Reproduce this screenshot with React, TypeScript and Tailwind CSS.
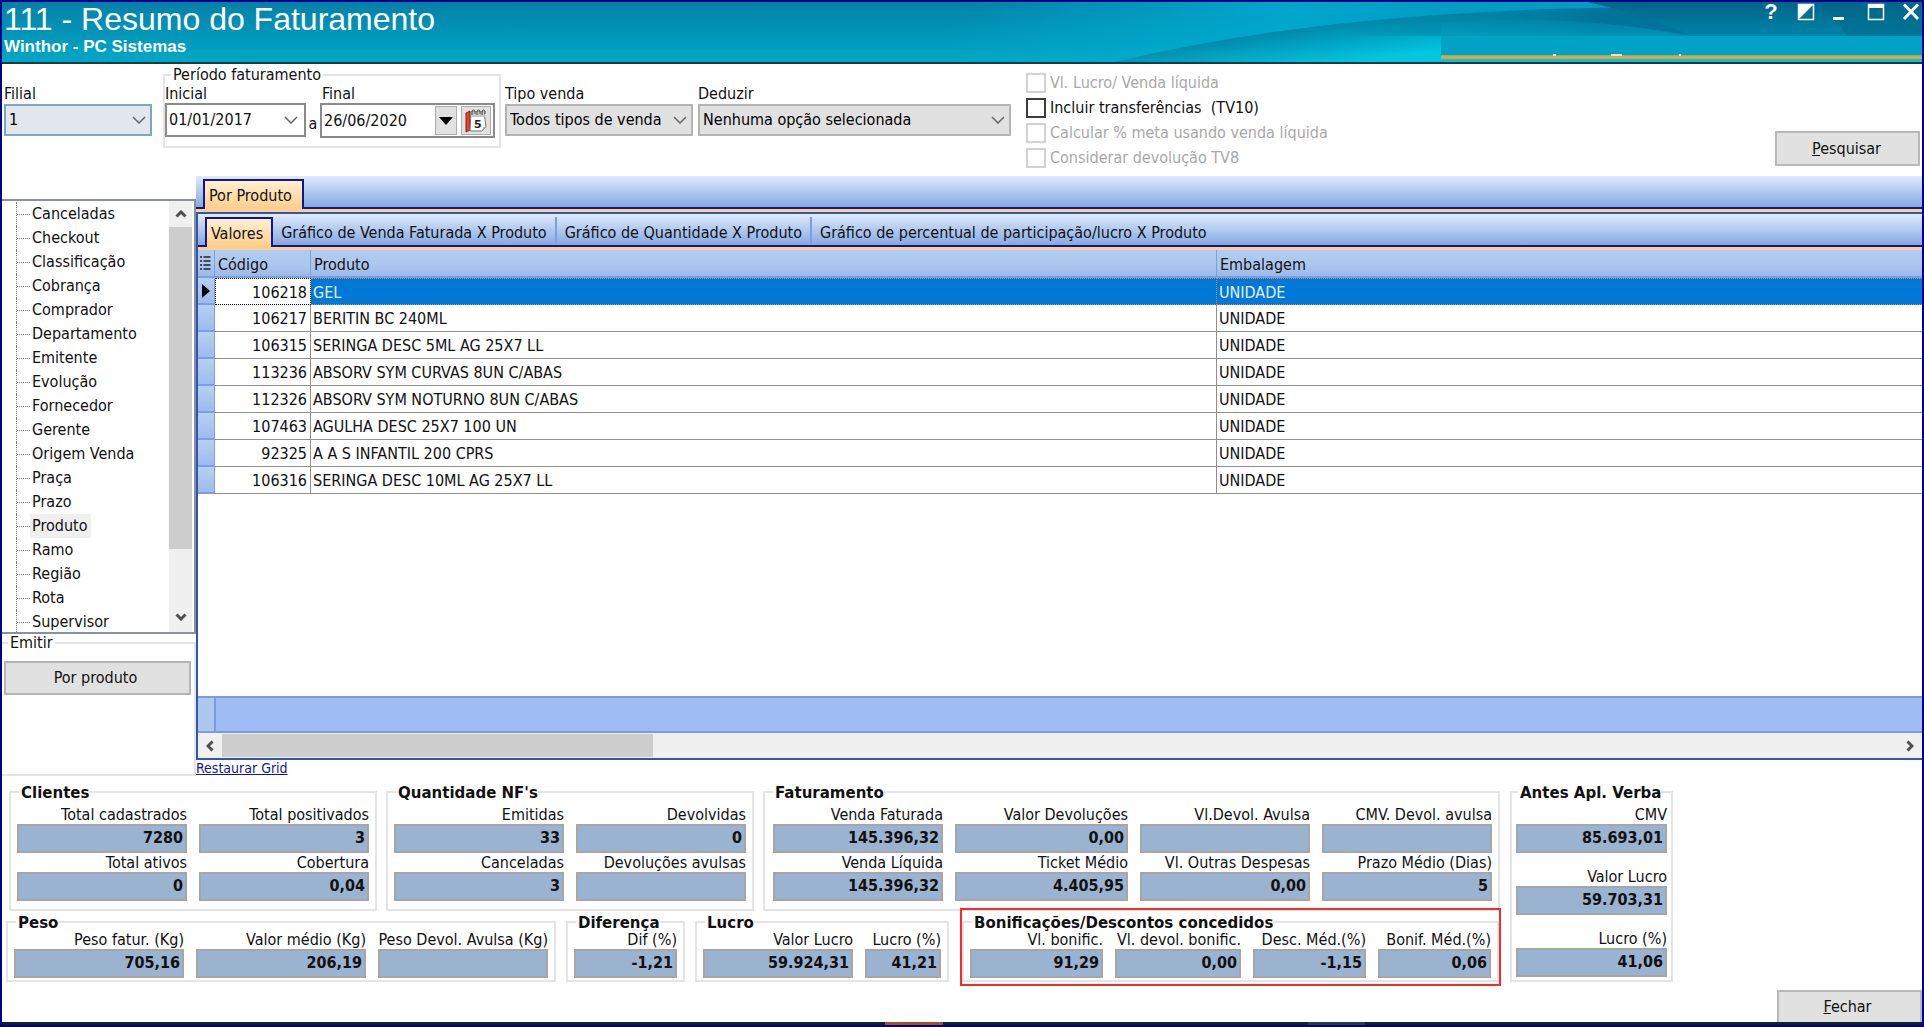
import React, { useId, useState } from 'react';
import { clsx } from 'clsx';

interface StatProps {
    label: string;
    value?: string;
    width?: string;
}

interface Product {
    code: string;
    name: string;
    unit: string;
}

const treeItems = [
    'Canceladas', 'Checkout', 'Classificação', 'Cobrança', 'Comprador', 'Departamento',
    'Emitente', 'Evolução', 'Fornecedor', 'Gerente', 'Origem Venda', 'Praça', 'Prazo',
    'Produto', 'Ramo', 'Região', 'Rota', 'Supervisor',
];

const products: Product[] = [
    { code: '106218', name: 'GEL', unit: 'UNIDADE' },
    { code: '106217', name: 'BERITIN BC 240ML', unit: 'UNIDADE' },
    { code: '106315', name: 'SERINGA DESC 5ML AG 25X7 LL', unit: 'UNIDADE' },
    { code: '113236', name: 'ABSORV SYM CURVAS 8UN C/ABAS', unit: 'UNIDADE' },
    { code: '112326', name: 'ABSORV SYM NOTURNO 8UN C/ABAS', unit: 'UNIDADE' },
    { code: '107463', name: 'AGULHA DESC 25X7 100 UN', unit: 'UNIDADE' },
    { code: '92325', name: 'A A S INFANTIL 200 CPRS', unit: 'UNIDADE' },
    { code: '106316', name: 'SERINGA DESC 10ML AG 25X7 LL', unit: 'UNIDADE' },
];

const gridTabs = [
    'Valores',
    'Gráfico de Venda Faturada X Produto',
    'Gráfico de Quantidade X Produto',
    'Gráfico de percentual de participação/lucro X Produto',
];

const filters = [
    { label: 'Vl. Lucro/ Venda líquida', disabled: true },
    { label: 'Incluir transferências  (TV10)', disabled: false },
    { label: 'Calcular % meta usando venda líquida', disabled: true },
    { label: 'Considerar devolução TV8', disabled: true },
];

const Chevron: React.FC<{ className?: string }> = ({ className }) => (
    <svg viewBox="0 0 14 8" fill="none" stroke="#666" className={clsx('h-2 w-3.5', className)}>
        <path d="M1 1l6 6 6-6" strokeWidth="1.5" />
    </svg>
);

const ScrollArrow: React.FC<{ className?: string }> = ({ className }) => (
    <svg viewBox="0 0 12 8" fill="none" stroke="#505050" className={clsx('h-2 w-3', className)}>
        <path d="M1.500 6.500L6 2l4.500 4.500" strokeWidth="3" />
    </svg>
);

const CalendarIcon = () => (
    <svg viewBox="0 0 22 24" className="h-6 w-[22px]">
        <path d="M1 4l4-2v19l-4 2z" fill="#e0452c" stroke="#8f1d10" />
        <path d="M6 3h13l2 15-4 4H5z" fill="#fff" stroke="#777" />
        <path d="M17 22l1-4h3z" fill="#b5b5b5" />
        <path d="M6 3h13l1 5H6z" fill="#c9c9c9" />
        <path d="M7 6V2q1.500-2 3 0v3M12 6V2q1.500-2 3 0v3M17 6V2q1.500-2 3 0v3" fill="none" stroke="#444" />
        <text x="9" y="19" fontSize="11" fontWeight="700" fontFamily="DejaVu Sans" fill="#222233">5</text>
    </svg>
);

const HeaderArt = () => (
    <svg viewBox="0 0 1920 60" preserveAspectRatio="none" className="absolute inset-0 h-full w-full">
        <defs>
            <linearGradient id="base" x1="0" y1="0" x2="0" y2="1">
                <stop offset="0" stopColor="#0480a8" />
                <stop offset="1" stopColor="#00a8c6" />
            </linearGradient>
            <linearGradient id="sky" gradientUnits="userSpaceOnUse" x1="960" y1="0" x2="1400" y2="120">
                <stop offset="0" stopColor="#00b0d2" stopOpacity="0" />
                <stop offset="0.7" stopColor="#00acd0" stopOpacity="0.85" />
                <stop offset="1" stopColor="#009cc4" />
            </linearGradient>
            <linearGradient id="wave" gradientUnits="userSpaceOnUse" x1="1300" y1="20" x2="1306" y2="66">
                <stop offset="0" stopColor="#007ea3" />
                <stop offset="1" stopColor="#00c6e0" />
            </linearGradient>
            <linearGradient id="shade" gradientUnits="userSpaceOnUse" x1="1340" y1="0" x2="1600" y2="0">
                <stop offset="0" stopColor="#006a8e" stopOpacity="0" />
                <stop offset="1" stopColor="#00739a" />
            </linearGradient>
            <linearGradient id="glow" gradientUnits="userSpaceOnUse" x1="1540" y1="14" x2="1540" y2="34">
                <stop offset="0" stopColor="#0090b4" stopOpacity="0.2" />
                <stop offset="1" stopColor="#009cc0" stopOpacity="0.8" />
            </linearGradient>
            <linearGradient id="deep" x1="0" y1="0" x2="0" y2="1">
                <stop offset="0" stopColor="#00648a" />
                <stop offset="1" stopColor="#0084a6" />
            </linearGradient>
        </defs>
        <rect width="1920" height="60" fill="url(#base)" />
        <rect x="900" width="1020" height="60" fill="url(#sky)" />
        <path d="M1113 60Q1330 7 1650 5H1920V60z" fill="url(#wave)" />
        <path d="M1340 22Q1480 6 1650 5H1720V34H1340z" fill="url(#shade)" />
        <path d="M1439 21Q1560 10 1690 34H1439z" fill="url(#glow)" />
        <path d="M1586 0Q1640 12 1690 34H1920V0z" fill="url(#deep)" />
        <path d="M1817 0Q1832 14 1845 34H1920V0z" fill="#00688a" fillOpacity="0.5" />
        <path d="M1439 34H1920V53H1439z" fill="#00a2c5" />
        <path d="M1439 53.500H1920V57H1439z" fill="#f0a02c" />
        <path d="M1551 53h3M1609 53h11M1677 53h2" stroke="#fff" strokeWidth="1.500" />
    </svg>
);

const Stat: React.FC<StatProps> = ({ label, value = '', width = 'w-[170px]' }) => {
    const id = useId();
    return (
        <div className={clsx('flex flex-col', width)}>
            <label htmlFor={id} className="flex h-[18px] justify-end whitespace-nowrap leading-[18px]">{label}</label>
            <input
                id={id}
                readOnly
                value={value}
                className="h-[29px] w-full border-2 border-[#a6a6a6] bg-[#99b3d0] pr-0.5 pb-0.5 text-right font-bold outline-none"
            />
        </div>
    );
};

const Group: React.FC<{ title: string; className?: string; low?: boolean; children: React.ReactNode }> = ({ title, className, low, children }) => (
    <fieldset className={clsx('border-2 border-[#e4e4e4]', className)}>
        <legend
            className={clsx(
                'ml-0.5 pl-0.5 font-[DejaVu_Sans] text-[15px] font-bold whitespace-nowrap',
                low ? 'h-[19px] leading-[22px]' : 'h-5 leading-[22px]',
            )}
        >
            {title}
        </legend>
        {children}
    </fieldset>
);

const Select: React.FC<{ label: string; option: string; className?: string; boxClass?: string }> = ({ label, option, className, boxClass }) => {
    const id = useId();
    return (
        <div className={clsx('mt-5 flex flex-col', className)}>
            <label htmlFor={id} className="h-5 leading-5">{label}</label>
            <div className="relative">
                <select id={id} className={clsx('h-8 w-full appearance-none border-2 pl-[3px] text-black outline-none', boxClass)}>
                    <option>{option}</option>
                </select>
                <Chevron className="pointer-events-none absolute top-3 right-1.5" />
            </div>
        </div>
    );
};

const TitleBar = () => (
    <header className="relative flex h-[62px] justify-between border-b-2 border-[#123c44] text-white">
        <HeaderArt />
        <div className="relative pl-0.5 font-[Liberation_Sans]">
            <h1 className="text-[32px] leading-[34px] whitespace-nowrap">111 - Resumo do Faturamento</h1>
            <p className="text-[17px] leading-[22px] font-bold">Winthor - PC Sistemas</p>
        </div>
        <div className="relative flex h-5 gap-[17px] pr-0.5">
            <button aria-label="Ajuda" className="w-[18px] text-center font-[Liberation_Sans] text-[22px] leading-5 font-bold">?</button>
            <button aria-label="Tema" className="w-[18px]">
                <svg viewBox="0 0 18 20" className="h-5"><path d="M1 2h16L1 18z" fill="#fff" /><path d="M1.500 2.500h15v15h-15z" fill="none" stroke="#fff" strokeWidth="1.500" /></svg>
            </button>
            <button aria-label="Minimizar" className="w-[18px]">
                <svg viewBox="0 0 18 20" className="h-5"><path d="M1 15h11v3H1z" fill="#fff" /></svg>
            </button>
            <button aria-label="Maximizar" className="w-[18px]">
                <svg viewBox="0 0 18 20" className="h-5"><path d="M1.500 2.500h15v15h-15z" fill="none" stroke="#fff" strokeWidth="1.500" /><path d="M1 2h16v4H1z" fill="#fff" /></svg>
            </button>
            <button aria-label="Fechar janela" className="w-[18px]">
                <svg viewBox="0 0 18 20" className="h-5"><path d="M2 2.500l14 14.500M16 2.500L2 17" stroke="#fff" strokeWidth="3" /></svg>
            </button>
        </div>
    </header>
);

const FilterBar = () => (
    <section className="flex h-28 items-start">
        <Select label="Filial" option="1" className="ml-0.5 w-[148px]" boxClass="border-[#7ba6cc] bg-[#e1e7eb]" />
        <fieldset className="mt-0.5 ml-[11px] w-[338px] border-2 border-[#e4e4e4] pb-2">
            <legend className="ml-1.5 h-[18px] px-0.5 leading-[18px]">Período faturamento</legend>
            <div className="flex">
                <div className="flex w-[141px] flex-col">
                    <label htmlFor="inicial" className="h-[19px] leading-[19px]">Inicial</label>
                    <div className="flex h-[34px] items-center border-2 border-[#8a8a8a] pr-1.5 pl-0.5">
                        <input id="inicial" defaultValue="01/01/2017" className="w-full min-w-0 flex-1 outline-none" />
                        <button aria-label="Abrir data inicial"><Chevron /></button>
                    </div>
                </div>
                <span className="w-3.5 self-end pb-1 text-center">a</span>
                <div className="flex w-[175px] flex-col">
                    <label htmlFor="final" className="h-[19px] pl-0.5 leading-[19px]">Final</label>
                    <div className="flex h-[35px] items-center gap-1 border-2 border-[#8a8a8a] pr-0.5 pl-0.5">
                        <input id="final" defaultValue="26/06/2020" className="w-full min-w-0 flex-1 outline-none" />
                        <button aria-label="Abrir data final" className="flex h-[29px] w-[22px] items-center justify-center border border-[#adadad] bg-[#e1e1e1]">
                            <svg viewBox="0 0 14 8" className="h-2 w-3.5"><path d="M0 0h14L7 8z" /></svg>
                        </button>
                        <button aria-label="Calendário" className="flex h-[29px] w-[30px] items-center justify-center border border-[#adadad] bg-[#e1e1e1]">
                            <CalendarIcon />
                        </button>
                    </div>
                </div>
            </div>
        </fieldset>
        <Select label="Tipo venda" option="Todos tipos de venda" className="ml-1 w-[188px]" boxClass="border-[#b4b4b4] bg-[#e1e1e1]" />
        <Select label="Deduzir" option="Nenhuma opção selecionada" className="ml-[5px] w-[313px]" boxClass="border-[#b4b4b4] bg-[#e1e1e1]" />
        <div className="mt-1.5 ml-[15px] flex flex-col">
            {filters.map((f) => (
                <label key={f.label} className={clsx('flex h-[25px] items-center gap-1 whitespace-pre', f.disabled && 'text-[#a8a8a8]')}>
                    <input
                        type="checkbox"
                        disabled={f.disabled}
                        className="h-5 w-5 appearance-none border-2 border-[#3c3c3c] bg-white checked:bg-[#3c3c3c] disabled:border-[#d2d2d2]"
                    />
                    {f.label}
                </label>
            ))}
        </div>
        <button className="mt-[67px] mr-0.5 ml-auto h-[35px] w-[145px] border-2 border-[#b8b8b8] bg-[#e1e1e1] pr-0.5">
            <span className="underline">P</span>esquisar
        </button>
    </section>
);

const Sidebar = () => {
    const [selected, setSelected] = useState('Produto');

    return (
        <aside className="flex w-[194px] shrink-0 flex-col pt-[23px]">
            <div className="flex h-0 grow border-y-2 border-r-2 border-[#8b909b]">
                <ul className="grow overflow-hidden pt-px pl-3.5">
                    {treeItems.map((item) => (
                        <li key={item} className="flex h-6 items-center border-l border-dotted border-[#808080]">
                            <span className="w-[13px] border-t border-dotted border-[#808080]" />
                            <button
                                onClick={() => setSelected(item)}
                                className={clsx('h-6 pr-1 pl-0.5 leading-6 whitespace-nowrap', item === selected && 'bg-[#f0f0f0]')}
                            >
                                {item}
                            </button>
                        </li>
                    ))}
                </ul>
                <div className="mr-0.5 flex w-[23px] flex-col bg-[#f0f0f0]">
                    <button aria-label="Rolar para cima" className="flex h-[26px] items-center justify-center"><ScrollArrow /></button>
                    <div className="h-[322px] bg-[#cdcdcd]" />
                    <button aria-label="Rolar para baixo" className="mt-auto flex h-[30px] items-center justify-center"><ScrollArrow className="rotate-180" /></button>
                </div>
            </div>
            <fieldset className="h-[142px] border-y-2 border-r-2 border-[#e4e4e4] pl-0.5">
                <legend className="ml-1 h-[18px] px-0.5 leading-[18px]">Emitir</legend>
                <button className="mt-[9px] h-[34px] w-[187px] border-2 border-[#b4b4b4] bg-[#e1e1e1] pr-1">Por produto</button>
            </fieldset>
        </aside>
    );
};

const activeTab = 'border-2 border-b-0 border-[#14148c] bg-linear-to-b from-[#fff0cf] to-[#ffcd8c]';

const ProductGrid = () => {
    const [tab, setTab] = useState(gridTabs[0]);

    return (
        <section className="flex min-w-0 grow flex-col">
            <div className="flex h-[33px] items-end border-b-2 border-[#14148c] bg-linear-to-b from-[#dfebfe] to-[#85a9e0] pl-[7px]">
                <button className={clsx('-mb-0.5 h-[30px] pt-0.5 pr-2.5 pl-1 whitespace-nowrap', activeTab)}>Por Produto</button>
            </div>
            <div className="h-[3px] bg-[#ffcf90]" />
            <div className="flex grow flex-col border-2 border-r-0 border-[#2f57ad]">
                <div role="tablist" className="flex h-[33px] shrink-0 items-end border-b-2 border-[#14148c] bg-linear-to-b from-[#dfebfe] to-[#85a9e0] pl-[7px]">
                    {gridTabs.map((name, i) => (
                        <button
                            key={name}
                            role="tab"
                            aria-selected={name === tab}
                            onClick={() => setTab(name)}
                            className={clsx(
                                'whitespace-nowrap',
                                name === tab ? '-mb-0.5 h-[30px] pt-0.5 pr-2 pl-1' : 'mb-px h-[27px] px-2 pt-1',
                                name === tab && activeTab,
                                name !== tab && i < gridTabs.length - 1 && 'border-r-2 border-[#7d9fdc]',
                            )}
                        >
                            {name}
                        </button>
                    ))}
                </div>
                <div className="h-[3px] shrink-0 bg-[#ffcf90]" />
                <table className="w-full table-fixed border-separate border-spacing-0">
                    <colgroup>
                        <col className="w-[17px]" />
                        <col className="w-24" />
                        <col className="w-[906px]" />
                        <col />
                    </colgroup>
                    <thead>
                        <tr className="h-[28px] bg-linear-to-b from-[#b0cbf1] via-[#adc8ef] to-[#98b6e8] text-left">
                            <th className="border-r border-b-2 border-[#7d9fdb]">
                                <svg viewBox="0 0 12 14" className="ml-px h-3.5 w-3" stroke="#222" strokeWidth="1.500">
                                    <path d="M1 1h2M1 5h2M1 9h2M1 13h2M4.500 1h7M4.500 5h7M4.500 9h7M4.500 13h7" />
                                </svg>
                            </th>
                            <th className="border-r border-b-2 border-[#7d9fdb] pt-1 pl-[3px] font-normal">Código</th>
                            <th className="border-r border-b-2 border-[#7d9fdb] pt-1 pl-[3px] font-normal">Produto</th>
                            <th className="border-b-2 border-[#7d9fdb] pt-1 pl-[3px] font-normal">Embalagem</th>
                        </tr>
                    </thead>
                    <tbody>
                        {products.map((p, i) => (
                            <tr key={p.code} className="h-[27px]">
                                <td className="border-r border-b-2 border-[#7d9fdb] bg-linear-to-b from-[#b6d0f4] to-[#9dbbec]">
                                    {i === 0 && <svg viewBox="0 0 8 14" className="ml-1 h-3.5 w-2"><path d="M0 0l8 7-8 7z" /></svg>}
                                </td>
                                <td className={clsx('pt-0.5 pr-[3px] text-right', i === 0 ? 'border border-dotted border-black' : 'border-r border-b border-[#8f8f8f]')}>
                                    {p.code}
                                </td>
                                <td className={clsx('pt-0.5 pl-0.5', i === 0 ? 'border-y border-r border-dotted border-[#d58a4a] bg-[#0078d7] text-[#e4f0fb]' : 'border-r border-b border-[#8f8f8f]')}>
                                    {p.name}
                                </td>
                                <td className={clsx('pt-0.5 pl-0.5', i === 0 ? 'border-y border-dotted border-[#d58a4a] bg-[#0078d7] text-[#e4f0fb]' : 'border-b border-[#8f8f8f]')}>
                                    {p.unit}
                                </td>
                            </tr>
                        ))}
                    </tbody>
                </table>
                <div className="mt-auto flex h-[37px] shrink-0 border-y-2 border-[#7c9cdd] bg-[#9fbcf5]">
                    <div className="w-[18px] border-r-2 border-[#7c9cdd] bg-[#adc8ef]" />
                </div>
                <div className="flex h-[25px] shrink-0 items-stretch bg-[#f0f0f0]">
                    <button aria-label="Rolar para a esquerda" className="flex w-6 items-center justify-center"><ScrollArrow className="-rotate-90" /></button>
                    <div className="my-px w-1/4 bg-[#cdcdcd]" />
                    <button aria-label="Rolar para a direita" className="ml-auto flex w-6 items-center justify-center"><ScrollArrow className="rotate-90" /></button>
                </div>
            </div>
            <div className="flex h-4">
                <a href="#restaurar" className="text-sm leading-4 text-[#1414a0] underline">Restaurar Grid</a>
            </div>
        </section>
    );
};

const Totals = () => (
    <section className="flex gap-[10px] pt-1.5 pl-1">
        <div className="flex flex-col gap-px">
            <div className="flex gap-[9px] pl-[3px]">
                <Group title="Clientes" className="px-1.5 pb-2">
                    <div className="grid grid-cols-[auto_auto] gap-x-3 gap-y-px pt-1">
                        <Stat label="Total cadastrados" value="7280" />
                        <Stat label="Total positivados" value="3" />
                        <Stat label="Total ativos" value="0" />
                        <Stat label="Cobertura" value="0,04" />
                    </div>
                </Group>
                <Group title="Quantidade NF's" className="px-1.5 pb-2">
                    <div className="grid grid-cols-[auto_auto] gap-x-3 gap-y-px pt-1">
                        <Stat label="Emitidas" value="33" />
                        <Stat label="Devolvidas" value="0" />
                        <Stat label="Canceladas" value="3" />
                        <Stat label="Devoluções avulsas" />
                    </div>
                </Group>
                <Group title="Faturamento" className="px-1.5 pb-2">
                    <div className="grid grid-cols-[auto_auto_auto_auto] gap-x-3 gap-y-px pt-1 pl-0.5">
                        <Stat label="Venda Faturada" value="145.396,32" />
                        <Stat label="Valor Devoluções" value="0,00" width="w-[173px]" />
                        <Stat label="Vl.Devol. Avulsa" />
                        <Stat label="CMV. Devol. avulsa" />
                        <Stat label="Venda Líquida" value="145.396,32" />
                        <Stat label="Ticket Médio" value="4.405,95" width="w-[173px]" />
                        <Stat label="Vl. Outras Despesas" value="0,00" />
                        <Stat label="Prazo Médio (Dias)" value="5" />
                    </div>
                </Group>
            </div>
            <div className="flex gap-[10px]">
                <Group low title="Peso" className="px-1.5 pb-0.5">
                    <div className="flex gap-3">
                        <Stat label="Peso fatur. (Kg)" value="705,16" />
                        <Stat label="Valor médio (Kg)" value="206,19" />
                        <Stat label="Peso Devol. Avulsa (Kg)" />
                    </div>
                </Group>
                <Group low title="Diferença" className="px-1.5 pb-0.5">
                    <Stat label="Dif (%)" value="-1,21" width="w-[103px]" />
                </Group>
                <Group low title="Lucro" className="px-1.5 pb-0.5">
                    <div className="flex gap-3">
                        <Stat label="Valor Lucro" value="59.924,31" width="w-[150px]" />
                        <Stat label="Lucro (%)" value="41,21" width="w-[76px]" />
                    </div>
                </Group>
                <div className="relative ml-[3px]">
                    <Group low title="Bonificações/Descontos concedidos" className="px-1.5 pb-0.5">
                        <div className="flex gap-3">
                            <Stat label="Vl. bonific." value="91,29" width="w-[133px]" />
                            <Stat label="Vl. devol. bonific." value="0,00" width="w-[126px]" />
                            <Stat label="Desc. Méd.(%)" value="-1,15" width="w-[113px]" />
                            <Stat label="Bonif. Méd.(%)" value="0,06" width="w-[113px]" />
                        </div>
                    </Group>
                    <div className="pointer-events-none absolute -inset-x-0.5 -inset-y-1 border-2 border-[#fb2a2a]" />
                </div>
            </div>
        </div>
        <Group title="Antes Apl. Verba" className="px-1 pb-0.5">
            <div className="flex flex-col gap-[15px] pt-1">
                <Stat label="CMV" value="85.693,01" width="w-[151px]" />
                <Stat label="Valor Lucro" value="59.703,31" width="w-[151px]" />
                <Stat label="Lucro (%)" value="41,06" width="w-[151px]" />
            </div>
        </Group>
    </section>
);

const App: React.FC = () => {
    return (
        <div className="flex min-h-screen flex-col border-2 border-[#00008b] bg-white font-[DejaVu_Sans_Condensed,DejaVu_Sans,sans-serif] text-base leading-5 text-[#111]">
            <TitleBar />
            <FilterBar />
            <main className="flex grow">
                <Sidebar />
                <ProductGrid />
            </main>
            <Totals />
            <footer className="pt-2">
                <div className="flex justify-end">
                    <button className="h-8 w-[145px] border-2 border-b-0 border-[#b8b8b8] bg-[#e1e1e1] pr-1">
                        <span className="underline">F</span>echar
                    </button>
                </div>
                <div className="flex h-[3px] bg-[#17211f]">
                    <div className="ml-[46%] w-[3%] bg-[#a2521a]" />
                    <div className="ml-[19%] w-[3%] bg-[#333a3a]" />
                </div>
            </footer>
        </div>
    );
};

export default App;
